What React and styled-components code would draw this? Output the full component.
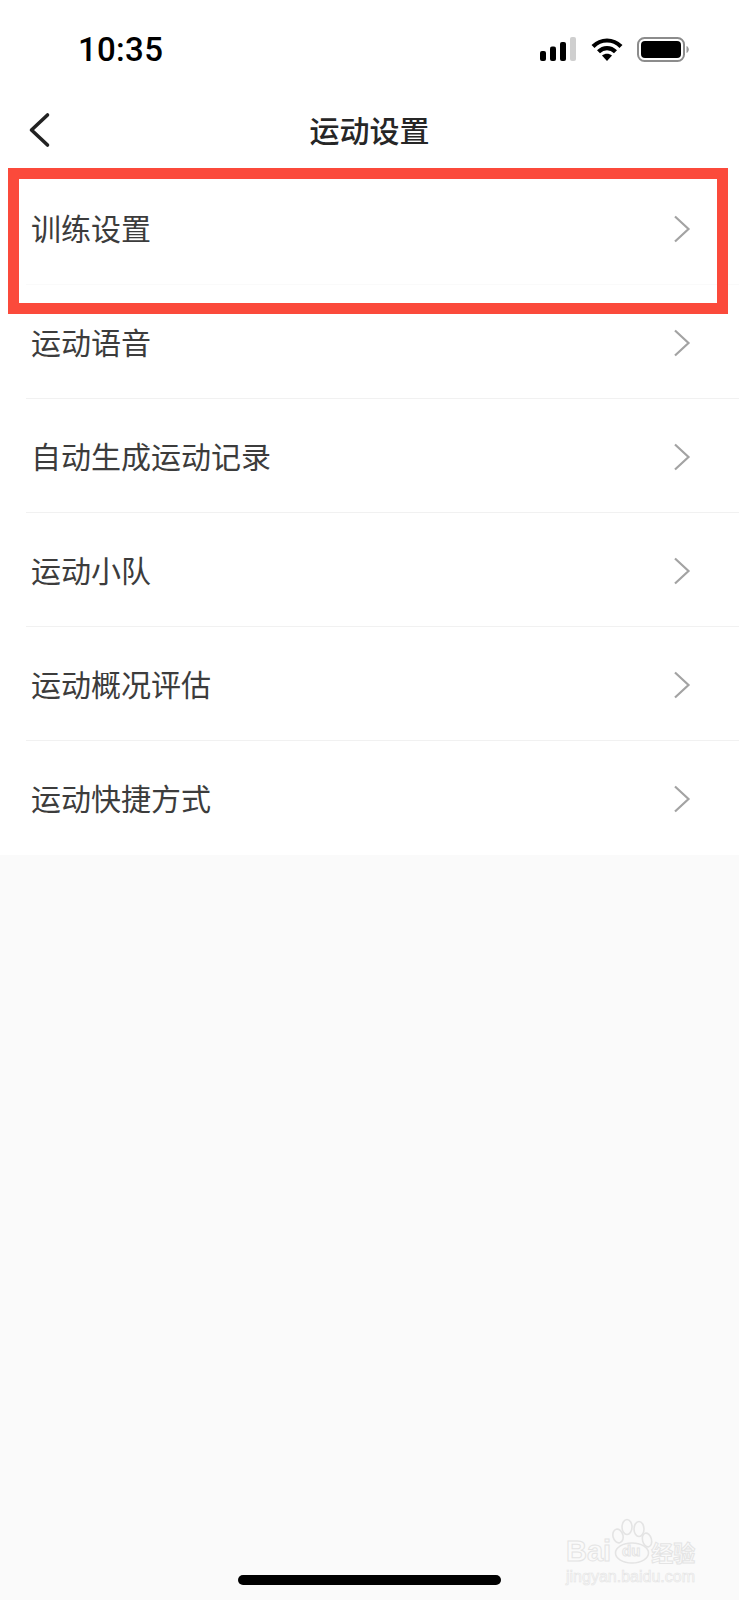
import React from 'react';
import styled, { createGlobalStyle } from 'styled-components';

const rows = ['训练设置', '运动语音', '自动生成运动记录', '运动小队', '运动概况评估', '运动快捷方式'];

const GlobalStyle = createGlobalStyle`
  html, body { margin: 0; padding: 0; background: #fafafa; }
  * { box-sizing: border-box; }
`;

const Page = styled.div`
  position: relative;
  width: 739px;
  height: 1600px;
  display: flex;
  flex-direction: column;
  overflow: hidden;
  background: #fafafa;
  font-family: "Noto Sans CJK SC", "Noto Sans", sans-serif;
`;

const StatusBar = styled.header`
  height: 90px;
  padding: 8px 50px 0 78px;
  background: #fff;
  display: flex;
  align-items: center;
  justify-content: space-between;
`;

const Clock = styled.span`
  font-family: Roboto, "Liberation Sans", sans-serif;
  font-size: 33px;
  font-weight: 500;
  letter-spacing: 0.3px;
  color: #000;
`;

const StatusIcons = styled.div`
  display: flex;
  align-items: center;
  gap: 14px;
`;

const NavBar = styled.nav`
  position: relative;
  height: 81px;
  padding-bottom: 4px;
  background: #fff;
  display: flex;
  align-items: center;
  justify-content: center;
`;

const BackIcon = styled.svg`
  position: absolute;
  left: 28px;
  top: 22px;
`;

const Title = styled.h1`
  margin: 0;
  font-size: 30px;
  font-weight: 500;
  color: #262626;
`;

const List = styled.ul`
  margin: 0;
  padding: 0 0 0 26px;
  list-style: none;
  background: #fff;
`;

const Row = styled.li`
  height: 114px;
  padding: 0 48px 0 5px;
  display: flex;
  align-items: center;
  justify-content: space-between;
  font-size: 30px;
  color: #3c3c3c;
  border-bottom: 1px solid ${p => p.$line};
`;

const RowLabel = styled.span`
  margin-bottom: 2px;
`;

const RowChevron = styled.svg`
  margin-top: 3px;
`;

const Filler = styled.div`
  flex: 1;
  display: flex;
  align-items: flex-end;
  justify-content: center;
  padding-bottom: 15px;
`;

const HomeBar = styled.div`
  width: 263px;
  height: 10px;
  border-radius: 5px;
  background: #000;
`;

const Highlight = styled.div`
  position: absolute;
  left: 8px;
  top: 168px;
  width: 720px;
  height: 146px;
  border: 11px solid #fb4a3b;
`;

const Watermark = styled.div`
  position: absolute;
  left: 566px;
  top: 1518px;
  width: 134px;
  color: transparent;
  -webkit-text-stroke: 1px #e4e4e4;
  pointer-events: none;
`;

const WatermarkPaw = styled.svg`
  position: absolute;
  left: 46px;
  top: 0;
`;

const WatermarkBrand = styled.div`
  position: relative;
  display: flex;
  align-items: center;
  height: 26px;
  margin-top: 20px;
  font-family: "Liberation Sans", sans-serif;
  font-size: 29px;
  font-weight: 700;
  line-height: 26px;
  white-space: nowrap;
`;

const WatermarkDu = styled.span`
  margin-left: 4px;
  width: 32px;
  text-align: center;
  font-size: 15px;
`;

const WatermarkCn = styled.span`
  margin-left: 4px;
  font-family: "Noto Sans CJK SC", sans-serif;
  font-size: 22px;
  font-weight: 700;
`;

const WatermarkUrl = styled.div`
  margin-top: 4px;
  font-family: "Liberation Sans", sans-serif;
  font-size: 16px;
  line-height: 18px;
  white-space: nowrap;
  -webkit-text-stroke: 0.6px #e4e4e4;
`;

const Chevron = () => (
  <RowChevron width="18" height="28" viewBox="0 0 18 28" fill="none">
    <path d="M2 1.5 L15.5 14 L2 26.5" stroke="#a3a3a3" strokeWidth="2.2" strokeLinejoin="miter" />
  </RowChevron>
);

const SignalIcon = () => (
  <svg width="37" height="25" viewBox="0 0 37 25">
    <rect x="0" y="14" width="6" height="10" rx="2" fill="#000" />
    <rect x="10" y="9.5" width="6" height="14.5" rx="2" fill="#000" />
    <rect x="20" y="5" width="6" height="19" rx="2" fill="#000" />
    <rect x="30" y="0" width="6" height="24" rx="2" fill="#cfcfcf" />
  </svg>
);

const WifiIcon = () => (
  <svg width="32" height="25" viewBox="0 0 32 25" fill="none">
    <path d="M2 9.5 C10 1.5 22 1.5 30 9.5" stroke="#000" strokeWidth="4.2" />
    <path d="M7.5 14.8 C12.5 9.8 19.5 9.8 24.5 14.8" stroke="#000" strokeWidth="4.2" />
    <path d="M11 18.6 C14 16 18 16 21 18.6 L16 24 Z" fill="#000" />
  </svg>
);

const BatteryIcon = () => (
  <svg width="52" height="25" viewBox="0 0 52 25">
    <rect x="1" y="1" width="46" height="23" rx="6.5" fill="none" stroke="#8c8c8c" strokeWidth="2" />
    <rect x="4" y="4" width="40" height="17" rx="4" fill="#000" />
    <path d="M49.5 9 C51 9.6 51.8 11 51.8 12.5 C51.8 14 51 15.4 49.5 16 Z" fill="#9a9a9a" />
  </svg>
);

const App = () => (
  <Page>
    <GlobalStyle />
    <StatusBar>
      <Clock>10:35</Clock>
      <StatusIcons>
        <SignalIcon />
        <WifiIcon />
        <BatteryIcon />
      </StatusIcons>
    </StatusBar>
    <NavBar>
      <BackIcon width="24" height="36" viewBox="0 0 24 36" fill="none">
        <path d="M19.5 3 L3.5 18 L19.5 33" stroke="#222" strokeWidth="3.6" strokeLinecap="round" strokeLinejoin="round" />
      </BackIcon>
      <Title>运动设置</Title>
    </NavBar>
    <List>
      {rows.map((label, i) => (
        <Row key={label} $line={i === 0 ? '#fafafa' : i === rows.length - 1 ? '#fff' : '#f1f1f1'}>
          <RowLabel>{label}</RowLabel>
          <Chevron />
        </Row>
      ))}
    </List>
    <Filler>
      <HomeBar />
    </Filler>
    <Highlight />
    <Watermark>
      <WatermarkPaw width="42" height="46" viewBox="0 0 42 46" fill="none" stroke="#e4e4e4" strokeWidth="1.6">
        <ellipse cx="6" cy="18" rx="5" ry="7" transform="rotate(-15 6 18)" />
        <ellipse cx="15" cy="9" rx="5" ry="7.5" />
        <ellipse cx="27" cy="11" rx="5" ry="7.5" />
        <ellipse cx="35" cy="22" rx="4.5" ry="7" transform="rotate(-15 35 22)" />
        <ellipse cx="20" cy="35" rx="16.5" ry="10" />
      </WatermarkPaw>
      <WatermarkBrand>
        <span>Bai</span>
        <WatermarkDu>du</WatermarkDu>
        <WatermarkCn>经验</WatermarkCn>
      </WatermarkBrand>
      <WatermarkUrl>jingyan.baidu.com</WatermarkUrl>
    </Watermark>
  </Page>
);

export default App;
